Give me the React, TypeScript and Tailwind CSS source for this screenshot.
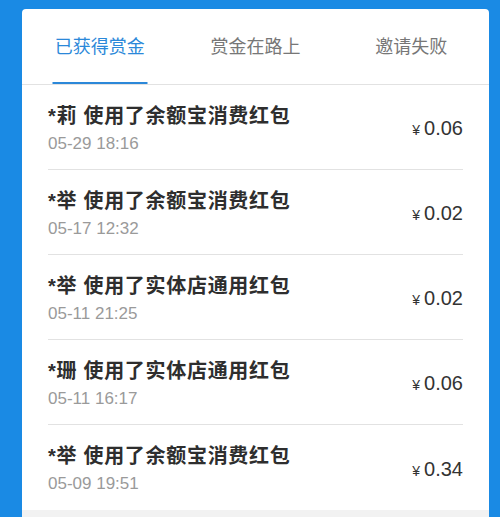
import React from "react";

type Reward = {
  name: string;
  action: string;
  time: string;
  amount: string;
};

const rewards: Reward[] = [
  { name: "*莉", action: "使用了余额宝消费红包", time: "05-29 18:16", amount: "0.06" },
  { name: "*举", action: "使用了余额宝消费红包", time: "05-17 12:32", amount: "0.02" },
  { name: "*举", action: "使用了实体店通用红包", time: "05-11 21:25", amount: "0.02" },
  { name: "*珊", action: "使用了实体店通用红包", time: "05-11 16:17", amount: "0.06" },
  { name: "*举", action: "使用了余额宝消费红包", time: "05-09 19:51", amount: "0.34" },
];

const tabs = ["已获得赏金", "赏金在路上", "邀请失败"];

const font = "font-['Liberation_Sans','Noto_Sans_CJK_SC',sans-serif]";

export default function App() {
  return (
    <div className={`h-[517px] w-[500px] overflow-hidden bg-[#1a8ae4] pl-[22px] pr-[11px] pt-[9px] ${font}`}>
      <div className="flex flex-col rounded-t-[4px] bg-white">
        {/* Tabs */}
        <div className="flex h-[76px] border-b border-[#e2e2e2]">
          {tabs.map((tab, i) => (
            <div key={tab} className="relative flex flex-1 items-center justify-center">
              <span
                className={
                  i === 0
                    ? "text-[18px] leading-[24px] text-[#2b88d9]"
                    : "text-[18px] leading-[24px] text-[#777777]"
                }
              >
                {tab}
              </span>
              {i === 0 && (
                <span className="absolute bottom-0 left-1/2 h-[2px] w-[95px] -translate-x-1/2 bg-[#2b88d9]" />
              )}
            </div>
          ))}
        </div>

        {/* Reward list */}
        <div className="flex flex-col px-[26px]">
          {rewards.map((r, i) => (
            <div
              key={i}
              className={
                i === rewards.length - 1
                  ? "flex h-[85px] items-center justify-between"
                  : "flex h-[85px] items-center justify-between border-b border-[#e2e2e2]"
              }
            >
              <div className="flex flex-col self-start pt-[18px]">
                <span className="text-[20px] font-bold leading-[26px] tracking-[0.7px] text-[#2e2e2e]">
                  {r.name} {r.action}
                </span>
                <span className="mt-[4px] text-[17px] leading-[22px] text-[#9a9a9a]">{r.time}</span>
              </div>
              <div className="flex items-baseline gap-[4px] pt-[2px] text-[#333333]">
                <span className="text-[14px]">¥</span>
                <span className="text-[20px]">{r.amount}</span>
              </div>
            </div>
          ))}
        </div>

        {/* Footer gap */}
        <div className="h-[20px] bg-[#f2f2f2]" />
      </div>
    </div>
  );
}
